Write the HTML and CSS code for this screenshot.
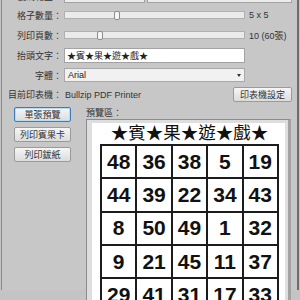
FILE: index.html
```html
<!DOCTYPE html>
<html lang="zh-Hant">
<head>
    <meta charset="UTF-8">
    <meta name="viewport" content="width=device-width, initial-scale=1.0">
    <title>賓果卡產生器</title>
    <link rel="stylesheet" href="styles.css">
</head>
<body>
    <div class="window">
        <!-- Settings -->
        <div class="form">
            <label class="lbl">號碼範圍：</label>
            <div class="pair">
                <input type="text" class="box box-small">
                <input type="text" class="box box-wide">
            </div>

            <label class="lbl">格子數量：</label>
            <input type="range" class="slider" min="3" max="10" value="5">
            <span class="val">5 x 5</span>

            <label class="lbl">列印頁數：</label>
            <input type="range" class="slider" min="1" max="50" value="10">
            <span class="val">10 (60張)</span>

            <label class="lbl">抬頭文字：</label>
            <input type="text" class="box title-input" value="★賓★果★遊★戲★">
            <span></span>

            <label class="lbl">字體：</label>
            <div class="select">Arial<span class="arrow"></span></div>
            <span></span>

            <label class="lbl">目前印表機：</label>
            <div class="printer">
                <span>Bullzip PDF Printer</span>
                <button class="btn btn-printer">印表機設定</button>
            </div>
        </div>

        <div class="lower">
            <div class="actions">
                <button class="btn btn-focus">單張預覽</button>
                <button class="btn">列印賓果卡</button>
                <button class="btn">列印鈸紙</button>
            </div>

            <!-- Preview -->
            <div class="preview">
                <div class="preview-label">預覽區：</div>
                <div class="frame">
                    <div class="page">
                        <div class="card-title">★賓★果★遊★戲★</div>
                        <div class="card">
                            <div class="cell">48</div><div class="cell">36</div><div class="cell">38</div><div class="cell">5</div><div class="cell">19</div>
                            <div class="cell">44</div><div class="cell">39</div><div class="cell">22</div><div class="cell">34</div><div class="cell">43</div>
                            <div class="cell">8</div><div class="cell">50</div><div class="cell">49</div><div class="cell">1</div><div class="cell">32</div>
                            <div class="cell">9</div><div class="cell">21</div><div class="cell">45</div><div class="cell">11</div><div class="cell">37</div>
                            <div class="cell">29</div><div class="cell">41</div><div class="cell">31</div><div class="cell">17</div><div class="cell">33</div>
                        </div>
                    </div>
                </div>
            </div>
        </div>
    </div>
</body>
</html>
```

FILE: styles.css
```css
body {
    margin: 0;
    width: 300px;
    height: 300px;
    overflow: hidden;
    background-color: #c4c4c4;
    font-family: 'Liberation Sans', 'Noto Sans CJK TC', sans-serif;
    font-size: 9px;
    color: #333;
}
.window {
    width: 295px;
    height: 300px;
    margin-left: 1px;
    border-left: 1px solid #8a8a8a;
    border-right: 2px solid #6b6b6b;
    background-color: #c7c7c7;
}
.form {
    display: grid;
    grid-template-columns: 60px 181px 45px;
    grid-template-rows: 13px 14px 16px 15px 14px 15px;
    column-gap: 2px;
    row-gap: 5px;
    margin-top: -10px;
    align-items: center;
}
.lbl {
    text-align: right;
    white-space: nowrap;
}
.val {
    padding-left: 2px;
    white-space: nowrap;
}
.pair {
    grid-column: 2 / 4;
    display: flex;
    gap: 2px;
    height: 13px;
}
.box {
    box-sizing: border-box;
    height: 100%;
    margin: 0;
    padding: 0 2px;
    border: 1px solid #a3a3a3;
    background-color: #fff;
    font: inherit;
    color: #222;
}
.box-small {
    width: 81px;
    background-color: #ececec;
}
.box-wide {
    flex: 1;
    background-color: #ececec;
}
.title-input {
    width: 181px;
    height: 15px;
}
.slider {
    -webkit-appearance: none;
    appearance: none;
    box-sizing: border-box;
    width: 181px;
    height: 8px;
    margin: 0;
    border: 1px solid #b0b0b0;
    background-color: #ebebeb;
}
.slider::-webkit-slider-thumb {
    -webkit-appearance: none;
    width: 6px;
    height: 9px;
    border: 1px solid #8c8c8c;
    border-radius: 2px;
    background-color: #f6f6f6;
}
.select {
    position: relative;
    box-sizing: border-box;
    height: 14px;
    line-height: 12px;
    padding-left: 3px;
    border: 1px solid #a8a8a8;
    background-color: #f1f1f1;
    color: #222;
}
.arrow {
    position: absolute;
    right: 3px;
    top: 5px;
    border-left: 2px solid transparent;
    border-right: 2px solid transparent;
    border-top: 3px solid #333;
}
.printer {
    grid-column: 2 / 4;
    display: flex;
    justify-content: space-between;
    align-items: center;
    padding-left: 1px;
    height: 15px;
}
.btn {
    box-sizing: border-box;
    height: 15px;
    padding: 0;
    border: 1px solid #9a9a9a;
    border-radius: 2px;
    background: linear-gradient(#f6f6f6, #dcdcdc);
    font: inherit;
    color: #333;
}
.btn-printer {
    width: 59px;
}
.btn-focus {
    border-color: #3b7cbd;
    box-shadow: inset 0 0 0 1px #b9dcf5;
}
.lower {
    display: flex;
    gap: 15px;
    margin-top: 5px;
}
.actions {
    display: flex;
    flex-direction: column;
    gap: 5px;
    width: 57px;
    padding-left: 12px;
}
.preview {
    width: 205px;
}
.preview-label {
    height: 12px;
    line-height: 12px;
}
.frame {
    height: 200px;
    padding: 3px 3px 0 5px;
    border-left: 1px solid #8c8c8c;
    border-top: 1px solid #8c8c8c;
    border-right: 3px solid #a2a2a2;
    background-color: #dedede;
}
.page {
    height: 100%;
    background-color: #fff;
}
.card-title {
    height: 18px;
    line-height: 18px;
    padding-left: 2px;
    text-align: center;
    font-family: 'Noto Sans CJK TC', sans-serif;
    font-size: 17.5px;
    color: #111;
}
.card {
    display: grid;
    grid-template-columns: repeat(5, 1fr);
    grid-auto-rows: 31.3px;
    gap: 2px;
    box-sizing: border-box;
    width: 179px;
    margin: 3px 0 0 8px;
    padding: 2px;
    background-color: #1c1c1c;
}
.cell {
    display: flex;
    align-items: center;
    justify-content: center;
    background-color: #fff;
    font-family: 'Liberation Sans', sans-serif;
    font-weight: bold;
    font-size: 21px;
    color: #111;
}
```
